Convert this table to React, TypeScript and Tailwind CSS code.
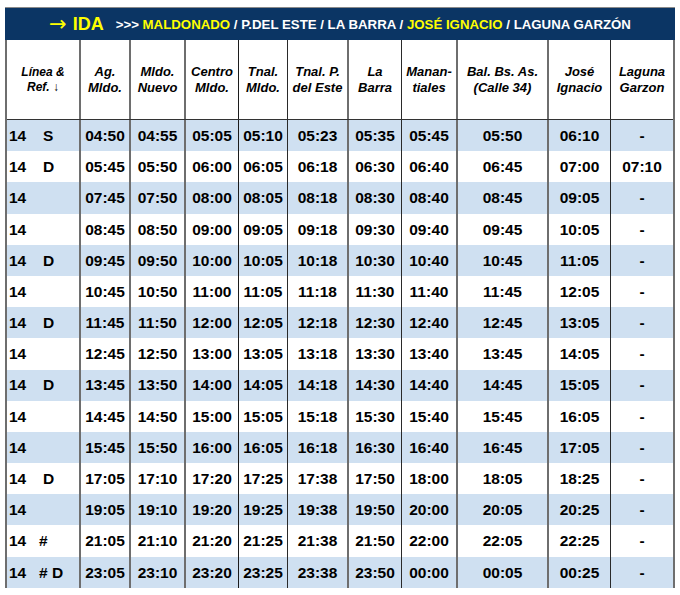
const COLS =
  'grid grid-cols-[72px_50px_55px_54px_49px_60px_54px_55px_91px_63px_63px]';

// left border of each column (the first column has the table edge instead)
const EDGE = [
  '',
  'border-l-2 border-[#6e6e6e]',
  'border-l-2 border-[#6e6e6e]',
  'border-l-2 border-[#6e6e6e]',
  'border-l border-[#1c1c1c]',
  'border-l border-[#2a2a2a]',
  'border-l-2 border-[#6e6e6e]',
  'border-l border-[#2a2a2a]',
  'border-l-2 border-[#6e6e6e]',
  'border-l-2 border-[#6e6e6e]',
  'border-l border-[#2a2a2a]',
];

const HEADERS: [string, string][] = [
  ['Ag.', 'Mldo.'],
  ['Mldo.', 'Nuevo'],
  ['Centro', 'Mldo.'],
  ['Tnal.', 'Mldo.'],
  ['Tnal. P.', 'del Este'],
  ['La', 'Barra'],
  ['Manan-', 'tiales'],
  ['Bal. Bs. As.', '(Calle 34)'],
  ['José', 'Ignacio'],
  ['Laguna', 'Garzon'],
];

const ROWS: { ref: string; times: string[] }[] = [
  { ref: 'S', times: ['04:50', '04:55', '05:05', '05:10', '05:23', '05:35', '05:45', '05:50', '06:10', '-'] },
  { ref: 'D', times: ['05:45', '05:50', '06:00', '06:05', '06:18', '06:30', '06:40', '06:45', '07:00', '07:10'] },
  { ref: '', times: ['07:45', '07:50', '08:00', '08:05', '08:18', '08:30', '08:40', '08:45', '09:05', '-'] },
  { ref: '', times: ['08:45', '08:50', '09:00', '09:05', '09:18', '09:30', '09:40', '09:45', '10:05', '-'] },
  { ref: 'D', times: ['09:45', '09:50', '10:00', '10:05', '10:18', '10:30', '10:40', '10:45', '11:05', '-'] },
  { ref: '', times: ['10:45', '10:50', '11:00', '11:05', '11:18', '11:30', '11:40', '11:45', '12:05', '-'] },
  { ref: 'D', times: ['11:45', '11:50', '12:00', '12:05', '12:18', '12:30', '12:40', '12:45', '13:05', '-'] },
  { ref: '', times: ['12:45', '12:50', '13:00', '13:05', '13:18', '13:30', '13:40', '13:45', '14:05', '-'] },
  { ref: 'D', times: ['13:45', '13:50', '14:00', '14:05', '14:18', '14:30', '14:40', '14:45', '15:05', '-'] },
  { ref: '', times: ['14:45', '14:50', '15:00', '15:05', '15:18', '15:30', '15:40', '15:45', '16:05', '-'] },
  { ref: '', times: ['15:45', '15:50', '16:00', '16:05', '16:18', '16:30', '16:40', '16:45', '17:05', '-'] },
  { ref: 'D', times: ['17:05', '17:10', '17:20', '17:25', '17:38', '17:50', '18:00', '18:05', '18:25', '-'] },
  { ref: '', times: ['19:05', '19:10', '19:20', '19:25', '19:38', '19:50', '20:00', '20:05', '20:25', '-'] },
  { ref: '#', times: ['21:05', '21:10', '21:20', '21:25', '21:38', '21:50', '22:00', '22:05', '22:25', '-'] },
  { ref: '# D', times: ['23:05', '23:10', '23:20', '23:25', '23:38', '23:50', '00:00', '00:05', '00:25', '-'] },
];

function TitleBar() {
  return (
    <div className="h-[33px] bg-[#0b3564] border-t border-[#8a8a8a] flex items-center justify-center font-bold text-[#ffff00] whitespace-nowrap">
      <span className="text-[21px] leading-none font-normal font-['DejaVu_Sans',sans-serif] mt-[1px]">→</span>
      <span className="text-[18px] ml-[6px]">IDA</span>
      <span className="text-[13.25px] ml-[12px] mt-[2px]">
        <span className="text-white">&gt;&gt;&gt; </span>
        MALDONADO
        <span className="text-white"> / P.DEL ESTE / LA BARRA / </span>
        JOSÉ IGNACIO
        <span className="text-white"> / LAGUNA GARZÓN</span>
      </span>
    </div>
  );
}

function HeaderRow() {
  return (
    <div className={`${COLS} h-[80px] border-b border-[#333] italic font-bold text-black`}>
      <div className="flex flex-col items-center justify-center text-[12px] leading-[15px]">
        <span>Línea &amp;</span>
        <span>Ref. ↓</span>
      </div>
      {HEADERS.map(([a, b], i) => (
        <div
          key={i}
          className={`${EDGE[i + 1]} flex flex-col items-center justify-center text-[13px] leading-[15.3px] whitespace-nowrap`}
        >
          <span>{a}</span>
          <span>{b}</span>
        </div>
      ))}
    </div>
  );
}

export default function App() {
  return (
    <div className="w-[680px] h-[595px] bg-white pl-[5px] pt-[7px] font-['Liberation_Sans',Arial,sans-serif]">
      <div className="w-[670px]">
        <TitleBar />
        <div className="border-l-2 border-r-2 border-[#6e6e6e]">
          <HeaderRow />
          {ROWS.map((row, r) => (
            <div
              key={r}
              className={`${COLS} h-[31.2px] text-[15.5px] font-bold text-black ${
                r % 2 === 0 ? 'bg-[#cfe0f1]' : 'bg-white'
              }`}
            >
              <div className="flex items-center pl-[2px]">
                <span className="w-[30px]">14</span>
                <span className={row.ref === 'S' || row.ref === 'D' ? 'pl-[4px]' : ''}>{row.ref}</span>
              </div>
              {row.times.map((t, i) => (
                <div key={i} className={`${EDGE[i + 1]} flex items-center justify-center`}>
                  {t}
                </div>
              ))}
            </div>
          ))}
        </div>
      </div>
    </div>
  );
}
